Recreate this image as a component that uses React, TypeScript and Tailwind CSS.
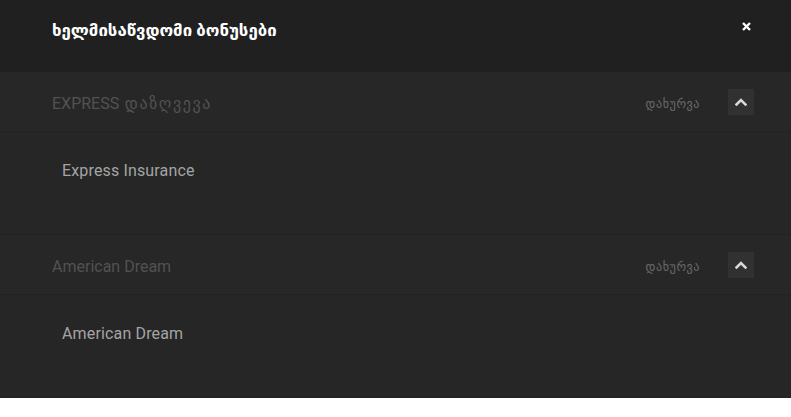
import React from "react";

const font = { fontFamily: 'Roboto, "DejaVu Sans", sans-serif' };

function Chevron() {
  return (
    <svg width="12" height="8" viewBox="0 0 12 8" fill="none">
      <path d="M1.5 6.5 L6 2 L10.5 6.5" stroke="#d8d8d8" strokeWidth="2.6" strokeLinecap="square" />
    </svg>
  );
}

function Section({ title, geo, body }: { title: string; geo?: string; body: string }) {
  return (
    <div>
      <div className="h-[60px] bg-[#272727] border-b border-[#222222] flex items-center justify-between pl-[52px] pr-[37px] pt-[4px]">
        <div className="text-[16px] text-[#525252]">
          {title}
          {geo ? <span className="tracking-[1.6px]"> {geo}</span> : null}
        </div>
        <div className="flex items-center">
          <span className="text-[12px] tracking-[0.6px] text-[#6a6a6a] mr-[28px] mt-[1px]">დახურვა</span>
          <div className="w-[26px] h-[26px] bg-[#313131] flex items-center justify-center -mt-[4px]">
            <Chevron />
          </div>
        </div>
      </div>
      <div className="h-[103px] bg-[#262626] border-b border-[#222222] pl-[62px] pt-[27px]">
        <div className="text-[16px] tracking-[0.15px] text-[#a4a4a4]">{body}</div>
      </div>
    </div>
  );
}

export default function App() {
  return (
    <div className="w-[791px]" style={font}>
      <div className="h-[72px] bg-[#202020] flex items-center justify-between pl-[52px] pr-[40px]">
        <div className="text-[16.8px] font-bold text-white -mt-[10px]">ხელმისაწვდომი ბონუსები</div>
        <svg width="9" height="9" viewBox="0 0 9 9" className="-mt-[19px]">
          <path d="M1 1 L8 8 M8 1 L1 8" stroke="#ffffff" strokeWidth="2.4" />
        </svg>
      </div>
      <Section title="EXPRESS" geo="დაზღვევა" body="Express Insurance" />
      <Section title="American Dream" body="American Dream" />
    </div>
  );
}
